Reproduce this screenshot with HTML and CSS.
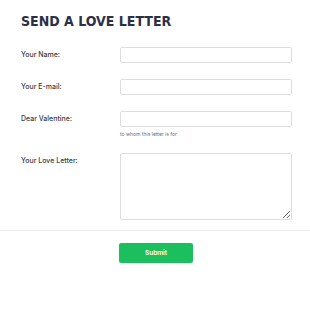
FILE: index.html
```html
<!doctype html>
<html lang="en">

<head>
  <meta charset="UTF-8">
  <meta name="viewport" content="width=device-width, initial-scale=1.0">
  <title>Send a love letter</title>
  <link rel="stylesheet" href="styles.css">
</head>

<body>
  <form class="letter">
    <h1 class="title">SEND A LOVE LETTER</h1>

    <div class="fields">
      <div class="row">
        <label for="name">Your Name:</label>
        <input id="name" type="text">
      </div>
      <div class="row">
        <label for="email">Your E-mail:</label>
        <input id="email" type="email">
      </div>
      <div class="row">
        <label for="to">Dear Valentine:</label>
        <div class="field">
          <input id="to" type="text">
          <p class="hint">to whom this letter is for</p>
        </div>
      </div>
      <div class="row">
        <label for="msg">Your Love Letter:</label>
        <textarea id="msg"></textarea>
      </div>
    </div>

    <div class="actions">
      <button type="submit" class="submit">Submit</button>
    </div>
  </form>
</body>

</html>
```

FILE: styles.css
```css
* {
  margin: 0;
  padding: 0;
  box-sizing: border-box;
}

body {
  background-color: #fff;
  font-family: Inter, "Noto Sans", sans-serif;
  color: #333;
}

.title {
  padding: 14px 0 0 21px;
  height: 47px;
  font-family: "DejaVu Sans Condensed", "DejaVu Sans", sans-serif;
  font-weight: bold;
  font-size: 14px;
  line-height: 14px;
  color: #2b3044;
}

.fields {
  display: flex;
  flex-direction: column;
  gap: 16px;
  padding: 0 18px 10px 21px;
}

.row {
  display: grid;
  grid-template-columns: 99px 1fr;
  align-items: start;
}

/* label sits on the first line of its field */
.row label {
  font-size: 7px;
  font-weight: 500;
  line-height: 16px;
  color: #363a46;
}

.row input,
.row textarea {
  display: block;
  width: 100%;
  height: 16px;
  border: 1px solid #dcdde0;
  border-radius: 2px;
  background: #fff;
}

.row textarea {
  height: 67px;
  resize: vertical;
}

.hint {
  margin-top: 4px;
  font-size: 5px;
  line-height: 6px;
  color: #6b6f78;
}

.actions {
  border-top: 1px solid #ececec;
  padding: 12px 0 0 119px;
}

.submit {
  display: block;
  width: 74px;
  height: 20px;
  border: none;
  border-radius: 2px;
  background-color: #1cbf5e;
  color: #fff;
  font-family: Inter, "Noto Sans", sans-serif;
  font-size: 6.5px;
  font-weight: 600;
}
```
